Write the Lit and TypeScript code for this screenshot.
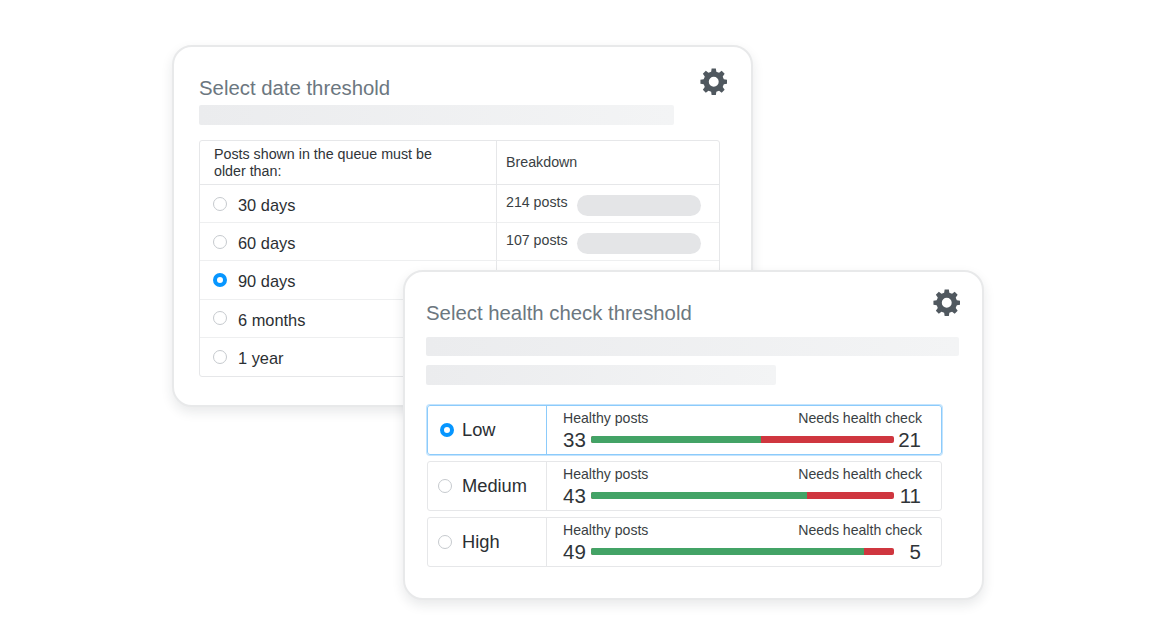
import {html, css, svg, LitElement} from 'lit';
import {customElement} from 'lit/decorators.js';

// 8 toothed gear, drawn on a 100x100 box
function gearPath() {
  const pts: string[] = [];
  const teeth = 8;
  for (let i = 0; i < teeth; i++) {
    const a = (i * 2 * Math.PI) / teeth - Math.PI / 2;
    const step = (2 * Math.PI) / teeth;
    const ring: [number, number][] = [
      [37, -0.5 * step],
      [38, -0.32 * step],
      [49, -0.2 * step],
      [49, 0.2 * step],
      [38, 0.32 * step],
    ];
    for (const [r, off] of ring) {
      pts.push(`${(50 + r * Math.cos(a + off)).toFixed(2)} ${(50 + r * Math.sin(a + off)).toFixed(2)}`);
    }
  }
  return `M${pts.join('L')}Z M50 32a18 18 0 1 0 0 36a18 18 0 1 0 0 -36Z`;
}

const gear = svg`<path d=${gearPath()} fill="#50585f" fill-rule="evenodd"></path>`;

@customElement('app-root')
export class AppRoot extends LitElement {
  static styles = css`
    :host {
      display: block;
      font-family: 'Liberation Sans', Arial, sans-serif;
      color: #2b2f33;
    }
    .stage {
      position: relative;
      width: 1158px;
      height: 643px;
      background: #fff;
      overflow: hidden;
    }
    .card {
      box-sizing: border-box;
      width: 581px;
      background: #fff;
      border: 2px solid #e8e9ea;
      border-radius: 20px;
      box-shadow: 0 5px 12px rgba(30, 40, 50, 0.1);
    }
    .date {
      position: absolute;
      left: 172px;
      top: 45px;
      height: 362px;
      padding: 30px 32px 0 25px;
    }
    .health {
      position: absolute;
      left: 403px;
      top: 270px;
      height: 330px;
      padding: 30px 23px 0 21px;
    }
    .gear {
      position: absolute;
      width: 27.5px;
      height: 27.5px;
    }
    .date .gear {
      right: 23.75px;
      top: 20.5px;
    }
    .health .gear {
      right: 21.75px;
      top: 17px;
    }
    h2 {
      margin: 0;
      font-size: 20.35px;
      font-weight: 400;
      line-height: 23px;
      color: #6c7780;
    }
    .skeleton {
      height: 20px;
      border-radius: 2px;
      background: linear-gradient(90deg, #ebecee, #f3f4f5);
    }
    .date .skeleton {
      width: 475px;
      margin-top: 5px;
    }
    .health .skeleton.a {
      width: 533px;
      margin-top: 12px;
      height: 19px;
    }
    .health .skeleton.b {
      width: 350px;
      margin-top: 9px;
    }
    table {
      box-sizing: border-box;
      width: 521px;
      margin-top: 15px;
      border-collapse: separate;
      border-spacing: 0;
      border: 1px solid #e6e7e9;
      border-radius: 3px;
      table-layout: fixed;
    }
    th,
    td {
      box-sizing: border-box;
      padding: 0;
      font-weight: 400;
      text-align: left;
      border-bottom: 1px solid #eeeff0;
    }
    tr:last-child td {
      border-bottom: none;
    }
    .c1 {
      width: 297px;
      border-right: 1px solid #e6e7e9;
    }
    th {
      height: 44px;
      font-size: 14.25px;
      line-height: 17px;
      color: #3a3f44;
      border-bottom-color: #e6e7e9;
    }
    th.c1 {
      padding: 1px 50px 0 14px;
      color: #2f3438;
    }
    th.c2 {
      padding-left: 9px;
    }
    td {
      height: 38.2px;
    }
    .option {
      display: flex;
      align-items: center;
      gap: 11px;
      padding-left: 13px;
      font-size: 16.4px;
      color: #2b2f33;
    }
    .option span {
      position: relative;
      top: 2px;
    }
    .radio {
      box-sizing: border-box;
      flex: none;
      width: 14px;
      height: 14px;
      border: 1.5px solid #c6cace;
      border-radius: 50%;
      background: #fff;
    }
    .radio.on {
      border: 4px solid #0796ff;
    }
    .breakdown {
      display: flex;
      align-items: center;
      gap: 9px;
      padding-left: 9px;
      font-size: 14.2px;
      color: #3a3f44;
      white-space: nowrap;
    }
    .breakdown span {
      position: relative;
      top: -2px;
    }
    .pill {
      width: 124px;
      height: 21px;
      margin-top: 3px;
      border-radius: 11px;
      background: #e4e5e7;
    }
    .levels {
      display: flex;
      flex-direction: column;
      gap: 6px;
      width: 515px;
      margin: 20px 0 0 1px;
    }
    .level {
      box-sizing: border-box;
      display: flex;
      height: 50px;
      border: 1px solid #e6e7e9;
      border-radius: 3px;
    }
    .level.on {
      border: 1px solid #8ccbfb;
      box-shadow: 0 0 0 1px #c4e4fd;
    }
    .name {
      box-sizing: border-box;
      flex: none;
      display: flex;
      align-items: center;
      gap: 10px;
      width: 119px;
      padding-left: 10px;
      border-right: 1px solid #e6e7e9;
      font-size: 18.3px;
      color: #2b2f33;
    }
    .level.on .name {
      border-right-color: #8ccbfb;
    }
    .level.on .radio {
      margin-left: 2px;
      margin-right: -2px;
    }
    .stats {
      flex: 1;
      padding: 4px 19px 0 16px;
    }
    .labels {
      display: flex;
      justify-content: space-between;
      font-size: 14.1px;
      line-height: 16px;
      color: #3a3f44;
    }
    .values {
      display: flex;
      align-items: center;
      font-size: 20.5px;
      line-height: 23px;
      margin-top: 2px;
      color: #2f3438;
    }
    .values b {
      font-weight: 400;
      flex: none;
      width: 28px;
    }
    .values b:last-child {
      text-align: right;
      padding-right: 1px;
      box-sizing: border-box;
    }
    .bar {
      display: flex;
      flex: none;
      width: 303px;
      height: 7px;
      border-radius: 2px;
      overflow: hidden;
      background: #cf363f;
    }
    .bar i {
      display: block;
      background: #43a366;
    }
  `;

  dates = [
    {label: '30 days', posts: '214 posts', on: false},
    {label: '60 days', posts: '107 posts', on: false},
    {label: '90 days', posts: '', on: true},
    {label: '6 months', posts: '', on: false},
    {label: '1 year', posts: '', on: false},
  ];

  levels = [
    {name: 'Low', good: 33, bad: 21, width: 170, on: true},
    {name: 'Medium', good: 43, bad: 11, width: 216, on: false},
    {name: 'High', good: 49, bad: 5, width: 273, on: false},
  ];

  render() {
    return html`
      <div class="stage">
        <section class="card date">
          <svg class="gear" viewBox="0 0 100 100">${gear}</svg>
          <h2>Select date threshold</h2>
          <div class="skeleton"></div>
          <table>
            <tr>
              <th class="c1">Posts shown in the queue must be older than:</th>
              <th class="c2">Breakdown</th>
            </tr>
            ${this.dates.map(
              d => html`
                <tr>
                  <td class="c1">
                    <div class="option">
                      <div class="radio ${d.on ? 'on' : ''}"></div>
                      <span>${d.label}</span>
                    </div>
                  </td>
                  <td>
                    ${d.posts
                      ? html`<div class="breakdown"><span>${d.posts}</span><div class="pill"></div></div>`
                      : ''}
                  </td>
                </tr>
              `
            )}
          </table>
        </section>
        <section class="card health">
          <svg class="gear" viewBox="0 0 100 100">${gear}</svg>
          <h2>Select health check threshold</h2>
          <div class="skeleton a"></div>
          <div class="skeleton b"></div>
          <div class="levels">
            ${this.levels.map(
              l => html`
                <div class="level ${l.on ? 'on' : ''}">
                  <div class="name">
                    <div class="radio ${l.on ? 'on' : ''}"></div>
                    ${l.name}
                  </div>
                  <div class="stats">
                    <div class="labels"><span>Healthy posts</span><span>Needs health check</span></div>
                    <div class="values">
                      <b>${l.good}</b>
                      <div class="bar"><i style="width:${l.width}px"></i></div>
                      <b>${l.bad}</b>
                    </div>
                  </div>
                </div>
              `
            )}
          </div>
        </section>
      </div>
    `;
  }
}
